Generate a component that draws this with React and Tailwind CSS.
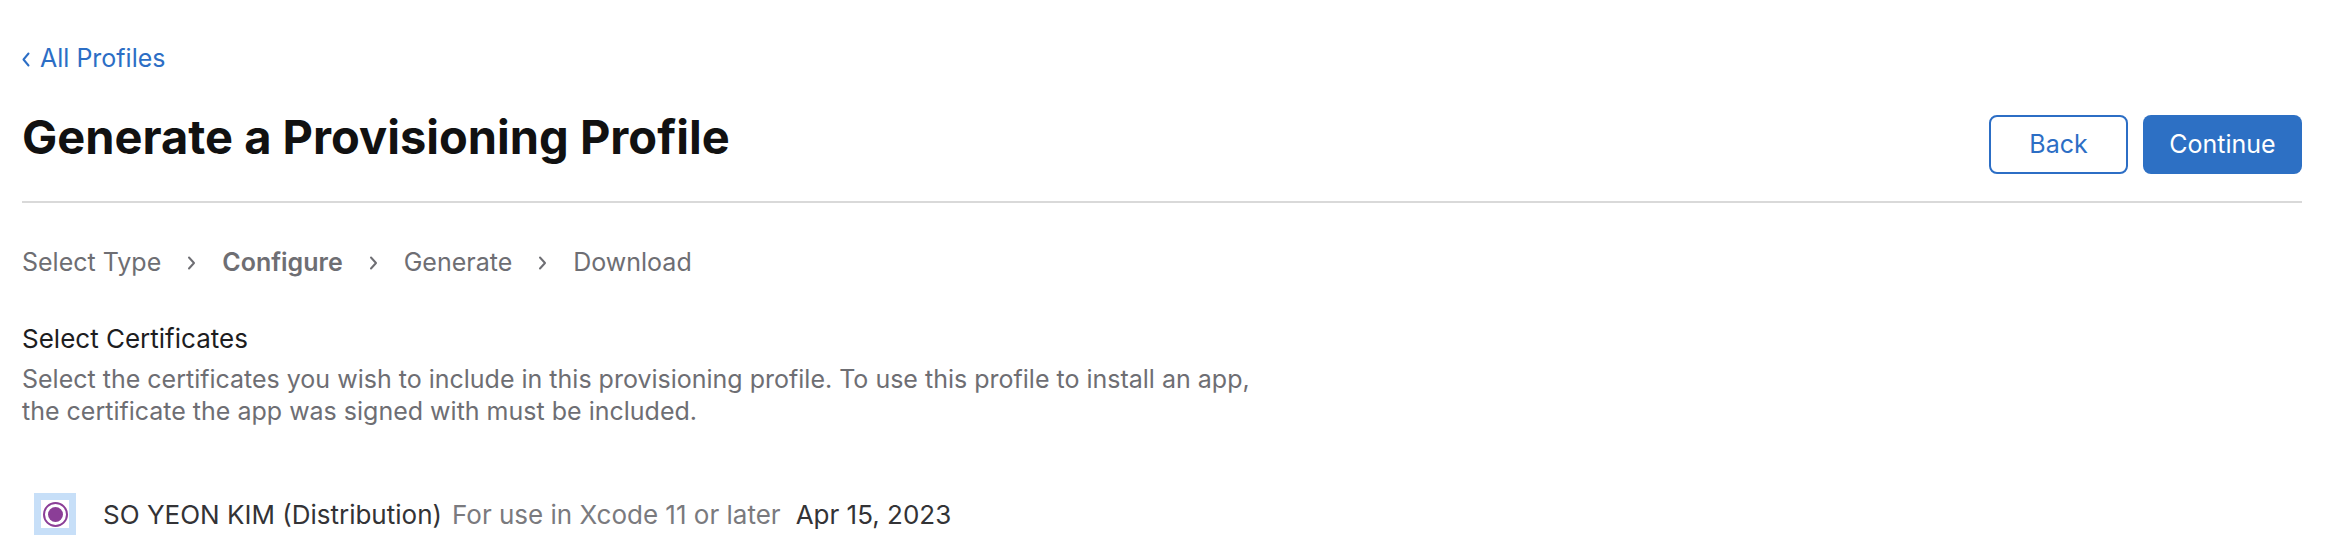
import React from 'react'

const Chevron = () => (
  <svg className="mx-[26px] h-[14px] w-[9px]" viewBox="0 0 9 14" fill="none" stroke="#6e6e73" strokeWidth="2" strokeLinecap="round" strokeLinejoin="round">
    <path d="M2 1.5 7 7l-5 5.5" />
  </svg>
)

const App = () => {
  const steps = ['Select Type', 'Configure', 'Generate', 'Download']

  return (
    <div className="min-h-screen bg-white pl-[22px] pr-[30px] pt-[43px]" style={{ fontFamily: 'Inter, "Liberation Sans", sans-serif' }}>
      {/* back link */}
      <a href="#" className="flex h-[32px] items-center text-[25px] text-[#2c6ec5]">
        <svg className="mr-[10px] h-[15px] w-[8px]" viewBox="0 0 8 15" fill="none" stroke="#2c6ec5" strokeWidth="2" strokeLinecap="round" strokeLinejoin="round">
          <path d="M6.5 1.5 1.5 7.5l5 6" />
        </svg>
        All Profiles
      </a>

      {/* header */}
      <div className="mt-[34px] flex items-start justify-between">
        <h1 className="text-[47px] font-bold leading-[56px] text-[#111111]">Generate a Provisioning Profile</h1>
        <div className="mt-[6px] flex gap-[15px]">
          <button className="h-[59px] w-[139px] rounded-[8px] border-2 border-[#2c6ec5] bg-white text-[25px] text-[#2c6ec5]">Back</button>
          <button className="h-[59px] w-[159px] rounded-[8px] bg-[#2d70c4] text-[25px] text-white">Continue</button>
        </div>
      </div>
      <div className="mt-[27px] h-[2px] bg-[#d9d9d9]" />

      {/* steps */}
      <div className="mt-[44px] flex h-[32px] items-center text-[25px] text-[#6e6e73]">
        {steps.map((s, i) => (
          <React.Fragment key={s}>
            {i > 0 && <Chevron />}
            <span className={s === 'Configure' ? 'font-semibold' : ''}>{s}</span>
          </React.Fragment>
        ))}
      </div>

      {/* certificates */}
      <h2 className="mt-[44px] text-[26px] leading-[32px] text-[#1d1d1f]">Select Certificates</h2>
      <p className="mt-[8px] text-[25px] leading-[32px] text-[#6e6e73]">
        Select the certificates you wish to include in this provisioning profile. To use this profile to install an app,
        <br />
        the certificate the app was signed with must be included.
      </p>

      <div className="mt-[66px] flex items-center text-[26px]">
        <div className="ml-[12px] flex h-[42px] w-[42px] items-center justify-center bg-[#c7dff8]">
          <div className="flex h-[28px] w-[28px] items-center justify-center bg-white">
            <div className="flex h-[25px] w-[25px] items-center justify-center rounded-full border-2 border-[#8b3e97]">
              <div className="h-[15px] w-[15px] rounded-full bg-[#8b3e97]" />
            </div>
          </div>
        </div>
        <span className="ml-[27px] text-[#333336]">SO YEON KIM (Distribution)</span>
        <span className="ml-[10px] text-[#7a7a7e]">For use in Xcode 11 or later</span>
        <span className="ml-[15px] text-[#333336]">Apr 15, 2023</span>
      </div>
    </div>
  )
}

export default App
